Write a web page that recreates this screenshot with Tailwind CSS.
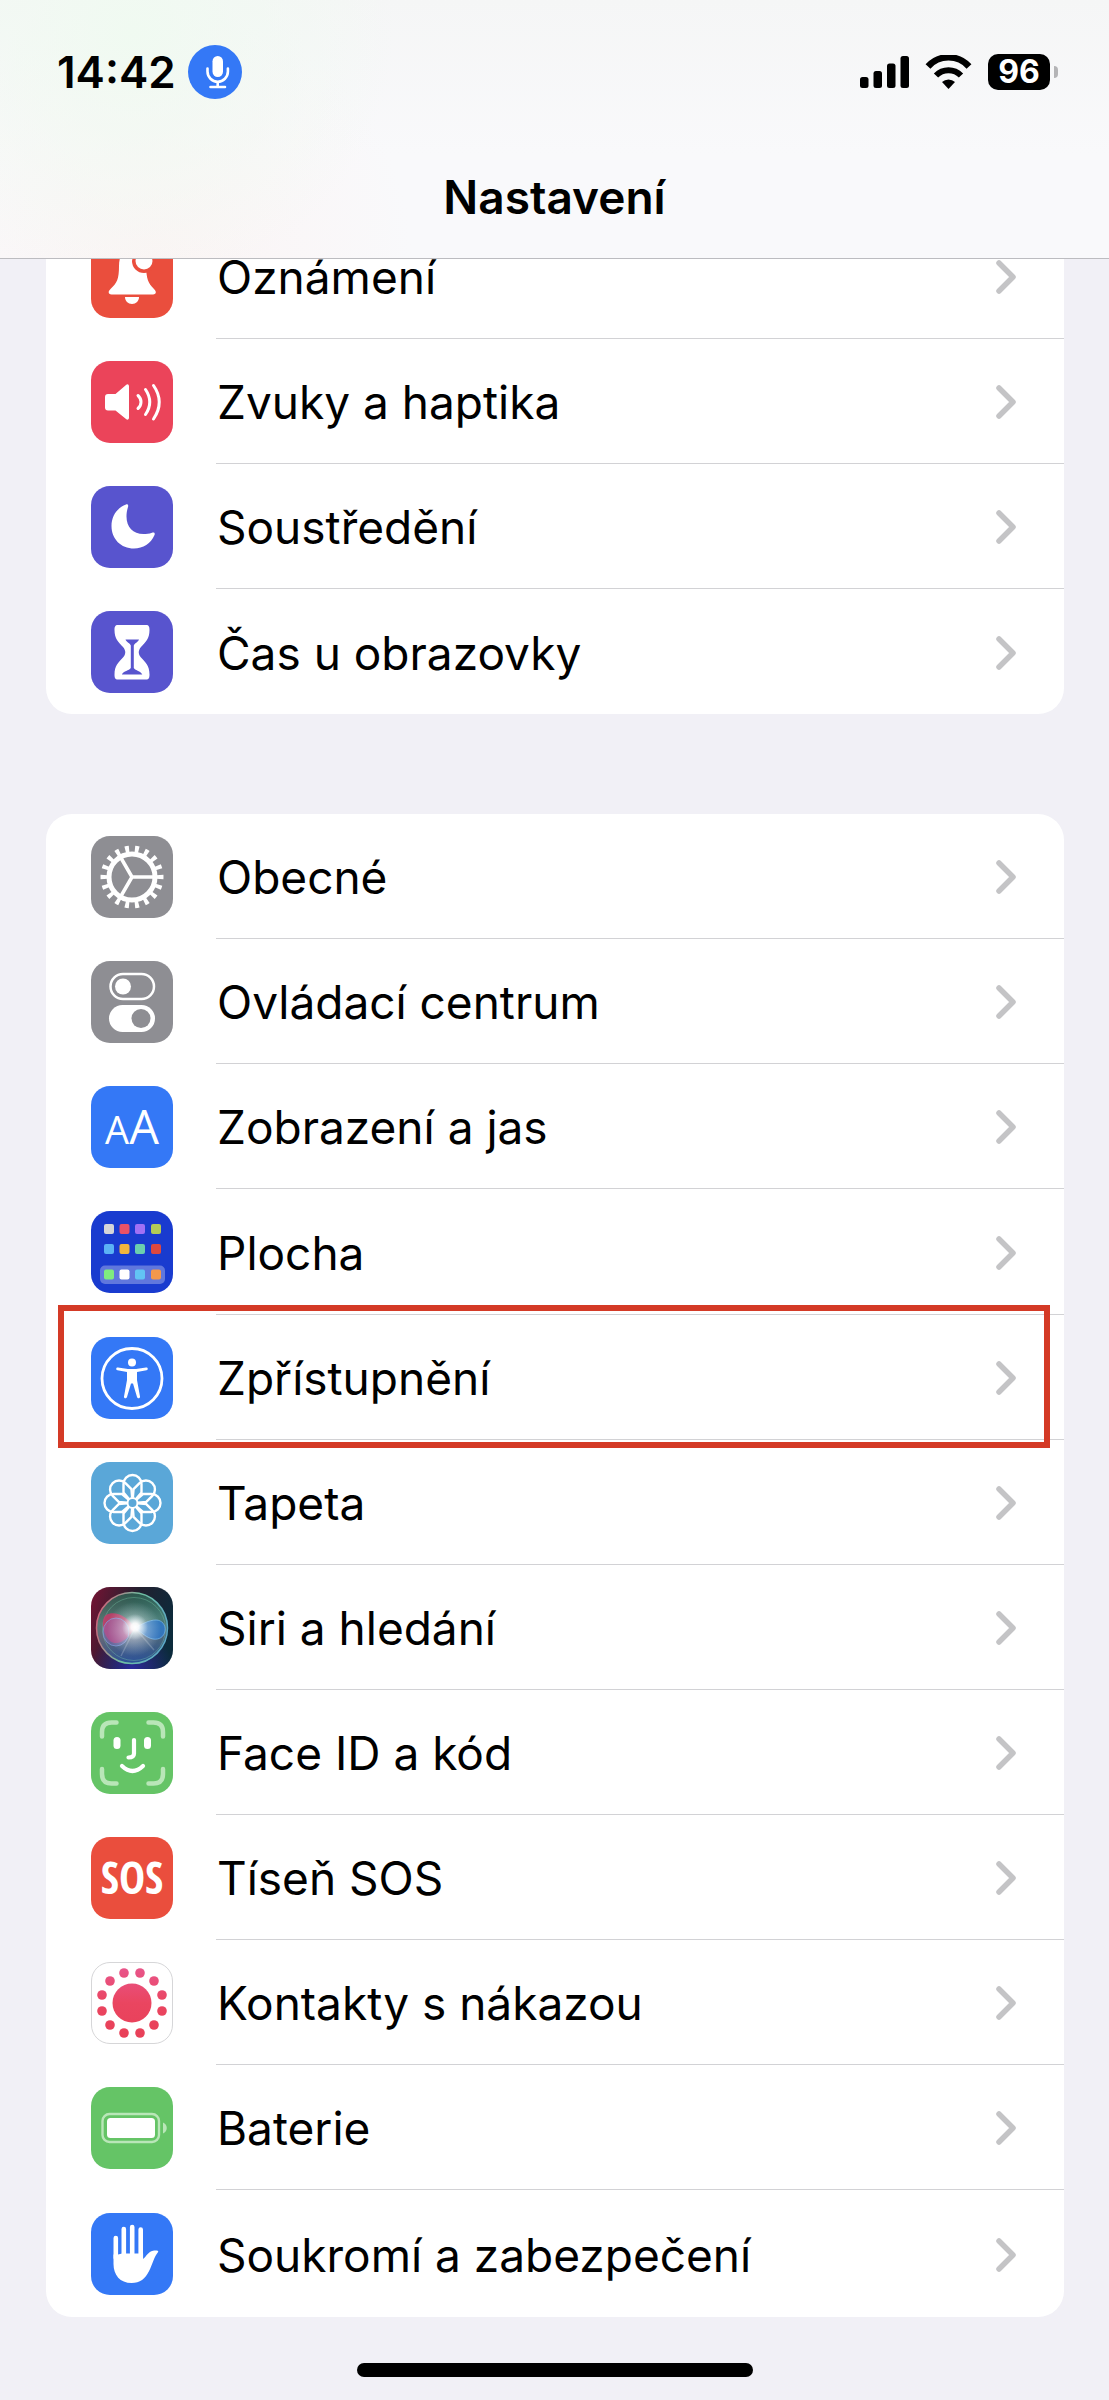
<!DOCTYPE html>
<html lang="cs">
<head>
  <meta charset="UTF-8" />
  <meta name="viewport" content="width=device-width, initial-scale=1.0"/>
  <title>Nastavení</title>
  <script src="https://cdn.jsdelivr.net/npm/@tailwindcss/browser@4"></script>
</head>
<body class="bg-[#f1f0f6] text-black font-['Inter',sans-serif] min-h-screen flex flex-col">

  <!-- shared shapes -->
  <svg class="hidden" aria-hidden="true">
    <symbol id="chevron" viewBox="0 0 20 34">
      <path d="M3 3l14 14L3 31" fill="none" stroke="#c4c4c6" stroke-width="5.500" stroke-linecap="round" stroke-linejoin="round"/>
    </symbol>
    <symbol id="petal" viewBox="0 0 82 82">
      <path d="M38 37l-5.500-6.500V22a9 9 0 0 1 18 0v8.500L45 37" fill="none" stroke="#fff" stroke-width="2.400" stroke-linejoin="round"/>
    </symbol>
  </svg>

  <header class="sticky top-0 z-10 border-b border-[#bcbcc0] bg-[#f8f8fa] bg-[radial-gradient(circle_at_12%_12%,#f0faf1_0%,transparent_26%),radial-gradient(circle_at_14%_100%,#fbf4f4_0%,transparent_26%),linear-gradient(#f5f6f6,#f9f9fb_60%)] pt-[45px] pb-[33px]">
    <div class="flex items-center justify-between pl-[57px] pr-[51px]">
      <div class="flex items-center gap-3">
        <time class="text-[44px] leading-[54px] font-semibold">14:42</time>
        <svg class="size-[54px]" viewBox="0 0 54 54" role="img" aria-label="Mikrofon">
          <circle cx="27" cy="27" r="27" fill="#3478f6"/>
          <rect x="24.500" y="11" width="10.500" height="21" rx="5.200" fill="#fff"/>
          <path d="M19.500 23.500v3a10.200 10.200 0 0 0 20.400 0v-3M29.700 37v5M22.500 42h14.500" fill="none" stroke="#fff" stroke-width="2.600" stroke-linecap="round"/>
        </svg>
      </div>
      <div class="flex items-center gap-4">
        <svg class="w-[49px] h-8" viewBox="0 0 49 32" role="img" aria-label="Signál">
          <rect y="21" width="8.500" height="11" rx="2.500"/>
          <rect x="13.500" y="15" width="8.500" height="17" rx="2.500"/>
          <rect x="27" y="7.500" width="8.500" height="24.500" rx="2.500"/>
          <rect x="40.500" width="8.500" height="32" rx="2.500"/>
        </svg>
        <svg class="w-[47px] h-[34px]" viewBox="0 0 47 34" role="img" aria-label="Wi-Fi">
          <path d="M3 11.500a27.500 27.500 0 0 1 41 0" fill="none" stroke="#000" stroke-width="6.500"/>
          <path d="M11 20.500a17.500 17.500 0 0 1 25 0" fill="none" stroke="#000" stroke-width="6"/>
          <path d="M17 27a9.500 9.500 0 0 1 13 0l-6.500 7z"/>
        </svg>
        <div class="flex items-center gap-1">
          <span class="w-[62px] h-9 rounded-[10px] bg-black text-white text-center text-[32px] leading-9 font-bold">96</span>
          <span class="w-1 h-3 rounded-r-full bg-[#b4b4b6]"></span>
        </div>
      </div>
    </div>
    <h1 class="mt-[70px] text-center text-[46px] leading-[56px] font-semibold">Nastavení</h1>
  </header>

  <main class="pl-[46px] pr-[45px]">
    <ul class="-mt-[45px] rounded-[26px] bg-white overflow-hidden">
      <li>
        <a href="#" class="flex items-center gap-[43px] pl-[45px]">
          <svg class="size-[82px] rounded-[19px] bg-[#ea4e3d] shrink-0" viewBox="0 0 82 82" aria-hidden="true">
            <path d="M41 13c-9 0-13 7-13 17 0 13-2 17-8.500 23-3 3-2 5.500 1 5.500h41.500c3 0 4-2.500 1-5.500-6-6-7.500-10-8-23 0-10-5-17-14-17z" fill="#fff"/>
            <path d="M34 61h14c0 4-3 7-7 7s-7-3-7-7z" fill="#fff"/>
            <circle cx="53" cy="25" r="12" fill="#ea4e3d"/>
            <circle cx="53" cy="25" r="8.500" fill="#fff"/>
          </svg>
          <span class="flex flex-1 h-[125px] items-center justify-between border-b border-[#d2d2d5] pl-px pr-12">
            <span class="pt-0.5 text-[46px] leading-[56px]">Oznámení</span>
            <svg class="w-5 h-9 pt-0.5"><use href="#chevron"/></svg>
          </span>
        </a>
      </li>
      <li>
        <a href="#" class="flex items-center gap-[43px] pl-[45px]">
          <svg class="size-[82px] rounded-[19px] bg-[#eb445a] shrink-0" viewBox="0 0 82 82" aria-hidden="true">
            <path d="M17 33h7.500L35 24c1.500-1.300 3-.5 3 1.500v31c0 2-1.500 2.800-3 1.500L24.500 49.500H17c-2 0-3-1-3-3V36c0-2 1-3 3-3z" fill="#fff"/>
            <path d="M47 34.500c4 3.500 4 9.500 0 13M54.500 28.500q8.500 12.500 0 25M62.500 24.500q11.500 16.500 0 33.500" fill="none" stroke="#fff" stroke-width="3" stroke-linecap="round"/>
          </svg>
          <span class="flex flex-1 h-[125px] items-center justify-between border-b border-[#d2d2d5] pl-px pr-12">
            <span class="pt-0.5 text-[46px] leading-[56px]">Zvuky a haptika</span>
            <svg class="w-5 h-9 pt-0.5"><use href="#chevron"/></svg>
          </span>
        </a>
      </li>
      <li>
        <a href="#" class="flex items-center gap-[43px] pl-[45px]">
          <svg class="size-[82px] rounded-[19px] bg-[#5854ce] shrink-0" viewBox="0 0 82 82" aria-hidden="true">
            <path d="M35 18.500C26 22 20.500 30 20.500 40c0 13 9.500 22.500 22.500 22.500 9 0 17-5 20.500-13.500.8-2-.5-3-2.500-2.300-3 1-5.500 1.300-8.500 1.300C42 48 35.500 41 35.500 30.500c0-3.500.6-6.500 1.500-9.500.6-2-.3-3-2-2.500z" fill="#fff"/>
          </svg>
          <span class="flex flex-1 h-[125px] items-center justify-between border-b border-[#d2d2d5] pl-px pr-12">
            <span class="pt-0.5 text-[46px] leading-[56px]">Soustředění</span>
            <svg class="w-5 h-9 pt-0.5"><use href="#chevron"/></svg>
          </span>
        </a>
      </li>
      <li>
        <a href="#" class="flex items-center gap-[43px] pl-[45px]">
          <svg class="size-[82px] rounded-[19px] bg-[#5854ce] shrink-0" viewBox="0 0 82 82" aria-hidden="true">
            <path d="M27 14h28c3 0 3.500 2 3.500 5 0 9-4 12-8.500 17-3 3.500-3 7 0 10.500 4.500 5 8.500 8 8.500 17 0 3-.5 5-3.500 5H27c-3 0-3.500-2-3.500-5 0-9 4-12 8.500-17 3-3.500 3-7 0-10.500-4.500-5-8.500-8-8.500-17 0-3 .5-5 3.500-5z" fill="#fff"/>
            <path d="M34.500 28.500h13.500c-1 3-4.500 3.500-5.200 6V57c2 3 6.500 2.500 8.500 6.500h-20.500c2-4 7-3.500 9-6.500V34.500c-.7-2.500-4.300-3-5.300-6z" fill="#5854ce"/>
          </svg>
          <span class="flex flex-1 h-[125px] items-center justify-between pl-px pr-12">
            <span class="pt-0.5 text-[46px] leading-[56px]">Čas u obrazovky</span>
            <svg class="w-5 h-9 pt-0.5"><use href="#chevron"/></svg>
          </span>
        </a>
      </li>
    </ul>

    <ul class="mt-[100px] rounded-[26px] bg-white">
      <li>
        <a href="#" class="flex items-center gap-[43px] pl-[45px]">
          <svg class="size-[82px] rounded-[19px] bg-[#8e8e93] shrink-0" viewBox="0 0 82 82" aria-hidden="true">
            <g fill="none" stroke="#fff">
              <circle cx="41" cy="41" r="23" stroke-width="5"/>
              <circle cx="41" cy="41" r="28" stroke-width="7" pathLength="36" stroke-dasharray=".8 1.200" stroke-dashoffset=".4"/>
              <path d="M41 41h22M41 41L30 22M41 41L30 60" stroke-width="3.500"/>
            </g>
          </svg>
          <span class="flex flex-1 h-[125px] items-center justify-between border-b border-[#d2d2d5] pl-px pr-12">
            <span class="pt-0.5 text-[46px] leading-[56px]">Obecné</span>
            <svg class="w-5 h-9 pt-0.5"><use href="#chevron"/></svg>
          </span>
        </a>
      </li>
      <li>
        <a href="#" class="flex items-center gap-[43px] pl-[45px]">
          <svg class="size-[82px] rounded-[19px] bg-[#8e8e93] shrink-0" viewBox="0 0 82 82" aria-hidden="true">
            <rect x="19.500" y="13" width="43.500" height="25" rx="12.500" fill="none" stroke="#fff" stroke-width="2.500"/>
            <circle cx="32" cy="25.500" r="8" fill="#fff"/>
            <rect x="18" y="44" width="46" height="27" rx="13.500" fill="#fff"/>
            <circle cx="50" cy="57.500" r="9.500" fill="#8e8e93"/>
          </svg>
          <span class="flex flex-1 h-[125px] items-center justify-between border-b border-[#d2d2d5] pl-px pr-12">
            <span class="pt-0.5 text-[46px] leading-[56px]">Ovládací centrum</span>
            <svg class="w-5 h-9 pt-0.5"><use href="#chevron"/></svg>
          </span>
        </a>
      </li>
      <li>
        <a href="#" class="flex items-center gap-[43px] pl-[45px]">
          <svg class="size-[82px] rounded-[19px] bg-[#3478f6] shrink-0" viewBox="0 0 82 82" aria-hidden="true">
            <text x="41" y="58" text-anchor="middle" fill="#fff" class="font-['Open_Sans',sans-serif]"><tspan class="text-[38px] font-medium">A</tspan><tspan class="text-[47px]">A</tspan></text>
          </svg>
          <span class="flex flex-1 h-[125px] items-center justify-between border-b border-[#d2d2d5] pl-px pr-12">
            <span class="pt-0.5 text-[46px] leading-[56px]">Zobrazení a jas</span>
            <svg class="w-5 h-9 pt-0.5"><use href="#chevron"/></svg>
          </span>
        </a>
      </li>
      <li>
        <a href="#" class="flex items-center gap-[43px] pl-[45px]">
          <svg class="size-[82px] rounded-[19px] bg-[#193bcf] shrink-0" viewBox="0 0 82 82" aria-hidden="true">
            <rect x="9" y="54.500" width="65" height="18.500" rx="5" fill="#6077dd"/>
            <rect x="13" y="13" width="10" height="10" rx="2" fill="#d5d5d8"/>
            <rect x="28.500" y="13" width="10" height="10" rx="2" fill="#ea5266"/>
            <rect x="44" y="13" width="10" height="10" rx="2" fill="#a070f5"/>
            <rect x="60" y="13" width="10" height="10" rx="2" fill="#b3cc56"/>
            <rect x="13" y="33" width="10" height="10" rx="2" fill="#5bb2f5"/>
            <rect x="28.500" y="33" width="10" height="10" rx="2" fill="#f3b53c"/>
            <rect x="44" y="33" width="10" height="10" rx="2" fill="#6bcfae"/>
            <rect x="60" y="33" width="10" height="10" rx="2" fill="#dd4840"/>
            <rect x="13" y="58.500" width="10" height="10" rx="2" fill="#7fec7f"/>
            <rect x="28.500" y="58.500" width="10" height="10" rx="2" fill="#fff"/>
            <rect x="44" y="58.500" width="10" height="10" rx="2" fill="#62c4f4"/>
            <rect x="60" y="58.500" width="10" height="10" rx="2" fill="#f3984c"/>
          </svg>
          <span class="flex flex-1 h-[126px] items-center justify-between border-b border-[#d2d2d5] pl-px pr-12">
            <span class="pt-0.5 text-[46px] leading-[56px]">Plocha</span>
            <svg class="w-5 h-9 pt-0.5"><use href="#chevron"/></svg>
          </span>
        </a>
      </li>
      <li class="relative">
        <a href="#" class="flex items-center gap-[43px] pl-[45px]">
          <svg class="size-[82px] rounded-[19px] bg-[#3478f6] shrink-0" viewBox="0 0 82 82" aria-hidden="true">
            <circle cx="41" cy="41.500" r="30" fill="none" stroke="#fff" stroke-width="2.800"/>
            <circle cx="41" cy="25.500" r="4" fill="#fff"/>
            <path d="M27 30.500l10 1.500h8l10-1.500c2-.3 2.500 2.300.5 2.800l-9.500 1.700v8l3 16.500c.4 2-2.400 2.500-3 .5L42 46.500h-2L36 60c-.6 2-3.400 1.500-3-.5L36 43v-8l-9.500-1.700c-2-.5-1.500-3.100.5-2.800z" fill="#fff"/>
          </svg>
          <span class="flex flex-1 h-[125px] items-center justify-between border-b border-[#d2d2d5] pl-px pr-12">
            <span class="pt-0.5 text-[46px] leading-[56px]">Zpřístupnění</span>
            <svg class="w-5 h-9 pt-0.5"><use href="#chevron"/></svg>
          </span>
        </a>
        <!-- highlight frame -->
        <span class="absolute left-3 right-[14px] -top-[10px] -bottom-2 border-[6px] border-[#d43a26] pointer-events-none"></span>
      </li>
      <li>
        <a href="#" class="flex items-center gap-[43px] pl-[45px]">
          <svg class="size-[82px] rounded-[19px] bg-[#5aa7d8] shrink-0" viewBox="0 0 82 82" aria-hidden="true">
            <use href="#petal"/>
            <use href="#petal" transform="rotate(45 41.500 41)"/>
            <use href="#petal" transform="rotate(90 41.500 41)"/>
            <use href="#petal" transform="rotate(135 41.500 41)"/>
            <use href="#petal" transform="rotate(180 41.500 41)"/>
            <use href="#petal" transform="rotate(225 41.500 41)"/>
            <use href="#petal" transform="rotate(270 41.500 41)"/>
            <use href="#petal" transform="rotate(315 41.500 41)"/>
            <circle cx="41.500" cy="41" r="5" fill="none" stroke="#fff" stroke-width="2"/>
          </svg>
          <span class="flex flex-1 h-[125px] items-center justify-between border-b border-[#d2d2d5] pl-px pr-12">
            <span class="pt-0.5 text-[46px] leading-[56px]">Tapeta</span>
            <svg class="w-5 h-9 pt-0.5"><use href="#chevron"/></svg>
          </span>
        </a>
      </li>
      <li>
        <a href="#" class="flex items-center gap-[43px] pl-[45px]">
          <svg class="size-[82px] rounded-[19px] shrink-0" viewBox="0 0 82 82" aria-hidden="true">
            <defs>
              <linearGradient id="siri-bg" x1="0" y1=".2" x2="1" y2=".5">
                <stop offset="0" stop-color="#6e1433"/>
                <stop offset=".5" stop-color="#22202f"/>
                <stop offset="1" stop-color="#0c2b3c"/>
              </linearGradient>
              <radialGradient id="siri-low" cx=".5" cy="1" r=".5">
                <stop offset="0" stop-color="#2b2a9c"/>
                <stop offset="1" stop-color="#2b2a9c" stop-opacity="0"/>
              </radialGradient>
              <linearGradient id="siri-orb" x1=".4" y1="0" x2=".5" y2="1">
                <stop offset="0" stop-color="#2a6653"/>
                <stop offset=".4" stop-color="#5a9a8c"/>
                <stop offset=".6" stop-color="#6a8092"/>
                <stop offset="1" stop-color="#2c5f9c"/>
              </linearGradient>
              <linearGradient id="siri-rim" x1="0" y1=".3" x2="1" y2=".6">
                <stop offset="0" stop-color="#d0617a"/>
                <stop offset=".5" stop-color="#6fc0a2"/>
                <stop offset="1" stop-color="#5ca8c8"/>
              </linearGradient>
              <radialGradient id="siri-glow">
                <stop offset="0" stop-color="#fff"/>
                <stop offset=".3" stop-color="#fff" stop-opacity=".9"/>
                <stop offset="1" stop-color="#cfe9f2" stop-opacity="0"/>
              </radialGradient>
            </defs>
            <rect width="82" height="82" fill="url(#siri-bg)"/>
            <rect width="82" height="82" fill="url(#siri-low)"/>
            <circle cx="41" cy="41" r="35.500" fill="url(#siri-orb)" fill-opacity=".75" stroke="url(#siri-rim)" stroke-width="1.500"/>
            <circle cx="43" cy="42" r="31.500" fill="none" stroke="#7fd0b0" stroke-opacity=".35"/>
            <path d="M44 41C36 29 24 23 15 28c-6 5-3 20 4 26 8 6 18-2 25-13z" fill="#c83a68" fill-opacity=".85"/>
            <ellipse cx="25" cy="45" rx="13" ry="14" fill="#8b6fc4" fill-opacity=".4" stroke="#7fa0e0" stroke-opacity=".7"/>
            <path d="M44 41c7-4 14-8 21-8 6 0 10 5 9 11s-6 9-12 8c-6-1-11-6-18-11z" fill="#2f78c8" fill-opacity=".85" stroke="#74b8ee" stroke-opacity=".7"/>
            <path d="M44 41L30 69M44 41l19 22" stroke="#fff" stroke-opacity=".2" stroke-width="1.500"/>
            <circle cx="43" cy="42" r="27" fill="url(#siri-glow)" fill-opacity=".5"/>
            <circle cx="44" cy="40" r="13" fill="url(#siri-glow)"/>
          </svg>
          <span class="flex flex-1 h-[125px] items-center justify-between border-b border-[#d2d2d5] pl-px pr-12">
            <span class="pt-0.5 text-[46px] leading-[56px]">Siri a hledání</span>
            <svg class="w-5 h-9 pt-0.5"><use href="#chevron"/></svg>
          </span>
        </a>
      </li>
      <li>
        <a href="#" class="flex items-center gap-[43px] pl-[45px]">
          <svg class="size-[82px] rounded-[19px] bg-[#65c466] shrink-0" viewBox="0 0 82 82" aria-hidden="true">
            <path d="M11 24.500V20q0-9.500 9.500-9.500h5M57.500 10.500h5q9.500 0 9.500 9.500v4.500M72 57v5q0 9.500-9.500 9.500h-5M25.500 71.500h-5Q11 71.500 11 62v-5" fill="none" stroke="#b9e6b8" stroke-width="4.500" stroke-linecap="round"/>
            <rect x="22.500" y="25" width="7" height="12" rx="3.500" fill="#fff"/>
            <rect x="53" y="25" width="7" height="12" rx="3.500" fill="#fff"/>
            <path d="M43 28v13.500q0 4-5.500 4M31 54q10.500 10 21 0" fill="none" stroke="#fff" stroke-width="4.200" stroke-linecap="round"/>
          </svg>
          <span class="flex flex-1 h-[125px] items-center justify-between border-b border-[#d2d2d5] pl-px pr-12">
            <span class="pt-0.5 text-[46px] leading-[56px]">Face ID a kód</span>
            <svg class="w-5 h-9 pt-0.5"><use href="#chevron"/></svg>
          </span>
        </a>
      </li>
      <li>
        <a href="#" class="flex items-center gap-[43px] pl-[45px]">
          <svg class="size-[82px] rounded-[19px] bg-[#ea4e3d] shrink-0" viewBox="0 0 82 82" aria-hidden="true">
            <text x="41" y="57" text-anchor="middle" fill="#fff" class="text-[44px] font-bold font-['Liberation_Sans_Narrow','Open_Sans_Condensed','Roboto_Condensed',sans-serif]">SOS</text>
          </svg>
          <span class="flex flex-1 h-[125px] items-center justify-between border-b border-[#d2d2d5] pl-px pr-12">
            <span class="pt-0.5 text-[46px] leading-[56px]">Tíseň SOS</span>
            <svg class="w-5 h-9 pt-0.5"><use href="#chevron"/></svg>
          </span>
        </a>
      </li>
      <li>
        <a href="#" class="flex items-center gap-[43px] pl-[45px]">
          <svg class="size-[82px] rounded-[19px] bg-white border border-[#d6d6d8] shrink-0" viewBox="1 1 80 80" aria-hidden="true">
            <defs>
              <linearGradient id="exposure" gradientUnits="userSpaceOnUse" x1="0" y1="6" x2="0" y2="76">
                <stop offset="0" stop-color="#e8558a"/>
                <stop offset=".5" stop-color="#ea4560"/>
                <stop offset="1" stop-color="#e84058"/>
              </linearGradient>
            </defs>
            <circle cx="41" cy="41" r="19.500" fill="url(#exposure)"/>
            <g fill="url(#exposure)">
              <circle cx="33" cy="11" r="4.800"/><circle cx="49" cy="11" r="4.800"/>
              <circle cx="19" cy="19" r="4.800"/><circle cx="63" cy="19" r="4.800"/>
              <circle cx="11" cy="33" r="4.800"/><circle cx="71" cy="33" r="4.800"/>
              <circle cx="11" cy="49" r="4.800"/><circle cx="71" cy="49" r="4.800"/>
              <circle cx="19" cy="63" r="4.800"/><circle cx="63" cy="63" r="4.800"/>
              <circle cx="33" cy="71" r="4.800"/><circle cx="49" cy="71" r="4.800"/>
            </g>
          </svg>
          <span class="flex flex-1 h-[125px] items-center justify-between border-b border-[#d2d2d5] pl-px pr-12">
            <span class="pt-0.5 text-[46px] leading-[56px]">Kontakty s nákazou</span>
            <svg class="w-5 h-9 pt-0.5"><use href="#chevron"/></svg>
          </span>
        </a>
      </li>
      <li>
        <a href="#" class="flex items-center gap-[43px] pl-[45px]">
          <svg class="size-[82px] rounded-[19px] bg-[#65c466] shrink-0" viewBox="0 0 82 82" aria-hidden="true">
            <rect x="11.500" y="27" width="56.500" height="28" rx="7" fill="none" stroke="#b9e6b8" stroke-width="2.400"/>
            <rect x="16" y="31" width="48" height="20" rx="3.500" fill="#fff"/>
            <path d="M72 35.500c5 2 5 9 0 11z" fill="#b9e6b8"/>
          </svg>
          <span class="flex flex-1 h-[125px] items-center justify-between border-b border-[#d2d2d5] pl-px pr-12">
            <span class="pt-0.5 text-[46px] leading-[56px]">Baterie</span>
            <svg class="w-5 h-9 pt-0.5"><use href="#chevron"/></svg>
          </span>
        </a>
      </li>
      <li>
        <a href="#" class="flex items-center gap-[43px] pl-[45px]">
          <svg class="size-[82px] rounded-[19px] bg-[#3478f6] shrink-0" viewBox="0 0 82 82" aria-hidden="true">
            <path d="M24.800 25v20M32.800 16v28M41.200 14v30M49.700 16.500v28" fill="none" stroke="#fff" stroke-width="4.600" stroke-linecap="round"/>
            <path d="M22.500 41.500h4.600l4-1h21v5.500c3-2 5-8 11-8.500 2-.2 5 0 4 1.500-4 5-5.500 12-9 19-4 8-9 12-17.500 12C29 70 22.500 62 22.500 51z" fill="#fff"/>
          </svg>
          <span class="flex flex-1 h-[127px] items-center justify-between pl-px pr-12">
            <span class="pt-0.5 text-[46px] leading-[56px]">Soukromí a zabezpečení</span>
            <svg class="w-5 h-9 pt-0.5"><use href="#chevron"/></svg>
          </span>
        </a>
      </li>
    </ul>
  </main>

  <footer class="mt-[46px] pb-[23px]">
    <div class="mx-auto w-[396px] h-[14px] rounded-full bg-black"></div>
  </footer>

</body>
</html>
